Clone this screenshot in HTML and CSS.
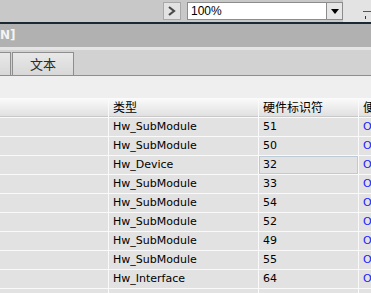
FILE: index.html
```html
<!DOCTYPE html>
<html>
<head>
<meta charset="utf-8">
<link rel="stylesheet" href="styles.css">
</head>
<body>
<div class="page">
  <div class="toolbar">
    <div class="nav-btn"><svg width="8" height="10" viewBox="0 0 8 10"><path d="M1 1 L6 5 L1 9" fill="none" stroke="#4a4a4a" stroke-width="2.2"/></svg></div>
    <div class="combo">
      <span class="combo-text">100%</span>
      <div class="combo-btn"><svg width="8" height="5" viewBox="0 0 8 5"><path d="M0 0 H8 L4 5 Z" fill="#000"/></svg></div>
    </div>
    <div class="slider"><div class="slider-line"></div><div class="slider-tick"></div></div>
  </div>
  <div class="darkline"></div>
  <div class="titlebar">N]</div>
  <div class="lightline"></div>
  <div class="tabs">
    <div class="tab tab-first"></div>
    <div class="tab">文本</div>
  </div>
  <div class="blank"></div>
  <div class="grid">
    <div class="hcell"></div><div class="hcell">类型</div><div class="hcell">硬件标识符</div><div class="hcell">便</div>

    <div class="cell"></div><div class="cell">Hw_SubModule</div><div class="cell">51</div><div class="cell link">O</div>
    <div class="cell"></div><div class="cell">Hw_SubModule</div><div class="cell">50</div><div class="cell link">O</div>
    <div class="cell"></div><div class="cell">Hw_Device</div><div class="cell focus">32</div><div class="cell link">O</div>
    <div class="cell"></div><div class="cell">Hw_SubModule</div><div class="cell">33</div><div class="cell link">O</div>
    <div class="cell"></div><div class="cell">Hw_SubModule</div><div class="cell">54</div><div class="cell link">O</div>
    <div class="cell"></div><div class="cell">Hw_SubModule</div><div class="cell">52</div><div class="cell link">O</div>
    <div class="cell"></div><div class="cell">Hw_SubModule</div><div class="cell">49</div><div class="cell link">O</div>
    <div class="cell"></div><div class="cell">Hw_SubModule</div><div class="cell">55</div><div class="cell link">O</div>
    <div class="cell"></div><div class="cell">Hw_Interface</div><div class="cell">64</div><div class="cell link">O</div>
    <div class="cell"></div><div class="cell"></div><div class="cell"></div><div class="cell"></div>
  </div>
</div>
</body>
</html>
```

FILE: styles.css
```css
html, body {
  margin: 0;
  padding: 0;
  background: #f0f0f0;
}
.page {
  width: 371px;
  height: 293px;
  overflow: hidden;
  font-family: "DejaVu Sans", "Noto Sans CJK SC", sans-serif;
  font-size: 11px;
  color: #000;
}
.toolbar {
  height: 22px;
  background: #c8c8c8;
  display: flex;
  align-items: flex-start;
  padding-left: 163px;
  box-sizing: border-box;
}
.nav-btn {
  margin-top: 2px;
  width: 18px;
  height: 18px;
  box-sizing: border-box;
  border: 1px solid #a8a8a8;
  background: #e2e2e2;
  display: flex;
  align-items: center;
  justify-content: center;
}
.combo {
  margin-left: 6px;
  margin-top: 2px;
  width: 156px;
  height: 18px;
  box-sizing: border-box;
  border: 1px solid #8c8c8c;
  background: #fff;
  display: flex;
  align-items: center;
}
.combo-text {
  flex: 1;
  padding-left: 3px;
  font-family: "Liberation Sans", sans-serif;
  font-size: 12px;
}
.combo-btn {
  width: 16px;
  height: 16px;
  box-sizing: border-box;
  border-left: 1px solid #8c8c8c;
  background: #e6e6e6;
  display: flex;
  align-items: center;
  justify-content: center;
}
.slider {
  flex: 1;
  height: 22px;
  background: #e3e3e3;
  position: relative;
}
.slider-line {
  position: absolute;
  left: 20px;
  top: 11px;
  width: 12px;
  height: 1px;
  background: #555;
}
.slider-tick {
  position: absolute;
  left: 22px;
  top: 16px;
  width: 1px;
  height: 3px;
  background: #333;
}
.darkline {
  height: 2px;
  background: #1d2733;
}
.titlebar {
  height: 23px;
  background: #b1b1b1;
  color: #f4f4f4;
  font-family: "DejaVu Sans", sans-serif;
  font-weight: bold;
  font-size: 12px;
  line-height: 23px;
}
.lightline {
  height: 3px;
  background: #e4e4e4;
}
.tabs {
  height: 26px;
  background: #d2d2d2;
  display: flex;
  align-items: flex-end;
  box-sizing: border-box;
  border-bottom: 1px solid #8e8e8e;
}
.tab {
  height: 23px;
  box-sizing: border-box;
  border: 1px solid #8e8e8e;
  border-bottom: none;
  background: linear-gradient(#e8e8e8, #d8d8d8);
  font-family: "Noto Sans CJK SC", sans-serif;
  font-size: 13px;
  color: #2a2a2a;
  line-height: 21px;
  text-align: center;
}
.tab-first {
  width: 11px;
  border-left: none;
  margin-right: 1px;
}
.tab:not(.tab-first) {
  width: 62px;
}
.blank {
  height: 22px;
  background: #efefef;
}
.grid {
  display: grid;
  grid-template-columns: 108px 149px 99px 20px;
  column-gap: 1px;
  row-gap: 1px;
  background: #fafafa;
}
.hcell {
  height: 19px;
  box-sizing: border-box;
  background: linear-gradient(#fbfbfb, #e0e0e0);
  font-family: "Noto Sans CJK SC", sans-serif;
  font-size: 12px;
  line-height: 18px;
  padding-left: 4px;
  white-space: nowrap;
  overflow: hidden;
  border-bottom: 1px solid #c8c8c8;
}
.cell {
  height: 18px;
  background: #e2e2e2;
  line-height: 18px;
  padding-left: 4px;
  white-space: nowrap;
  overflow: hidden;
  box-sizing: border-box;
  font-family: "DejaVu Sans", sans-serif;
  font-size: 11px;
}
.cell.focus {
  border: 1px solid #bccbd6;
  padding-left: 3px;
  line-height: 16px;
}
.cell.link {
  color: #1a1aff;
}
```
